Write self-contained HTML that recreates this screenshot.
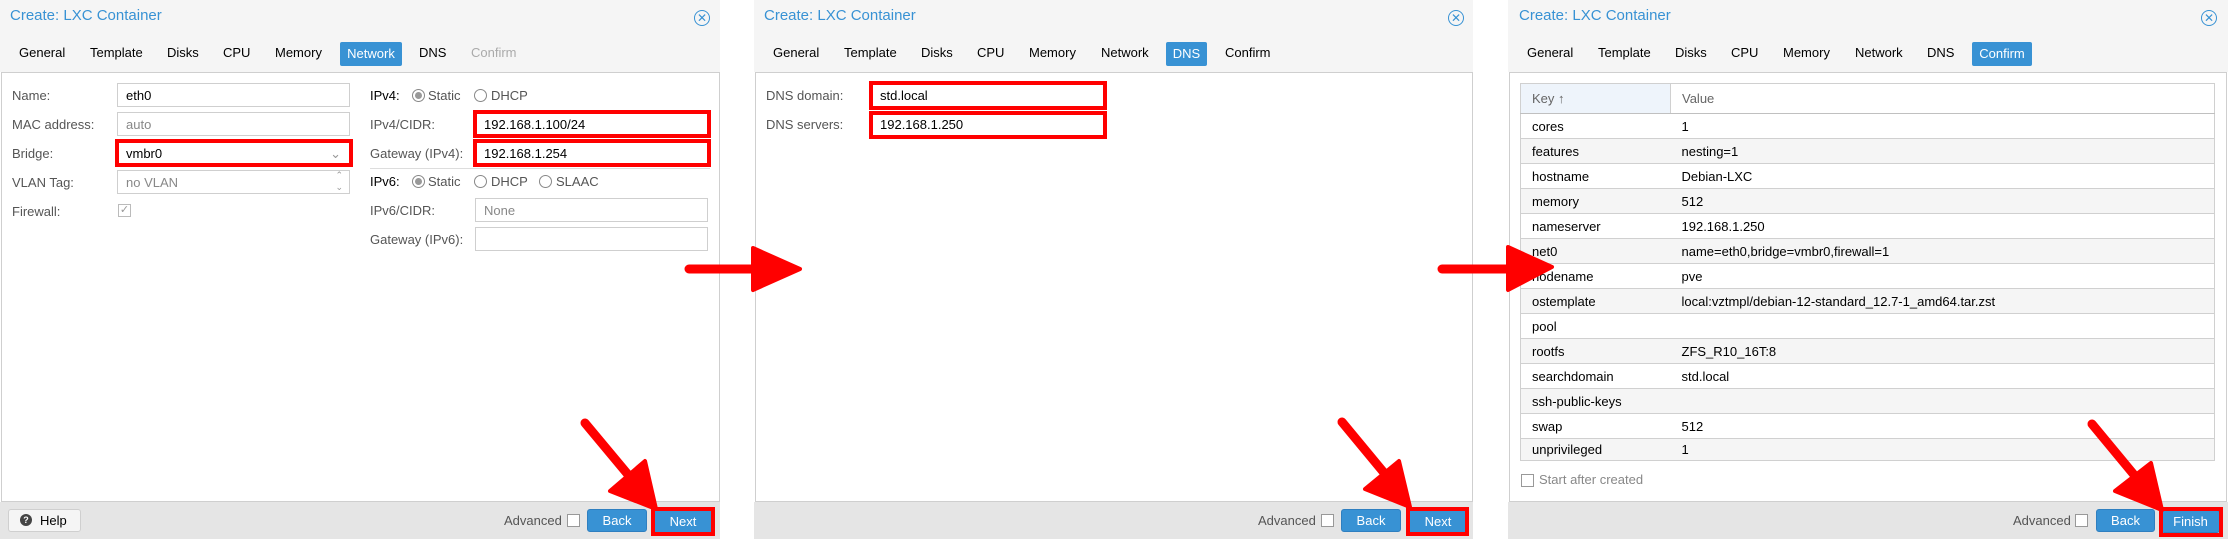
<!DOCTYPE html>
<html><head><meta charset="utf-8"><style>
*{box-sizing:border-box;margin:0;padding:0}
body{width:2228px;height:540px;background:#fff;position:relative;overflow:hidden;font-family:"Liberation Sans",Arial,sans-serif;font-size:13px;color:#000}
.a{position:absolute;white-space:nowrap}
.hdr{position:absolute;background:#f5f5f5;top:0;height:72px}
.title{position:absolute;top:7px;font-size:15px;color:#3892d4}
.close{position:absolute;top:10px;width:16px;height:16px;border:1px solid #3892d4;border-radius:50%;color:#3892d4;font-size:12px;line-height:14px;text-align:center}
.tab{position:absolute;top:45px;font-size:13px}
.tabact{position:absolute;top:42px;height:24px;background:#3892d4;color:#fff;border-radius:2px;text-align:center;line-height:24px;font-size:13px}
.body{position:absolute;top:72px;height:430px;background:#fff;border:1px solid #cfcfcf}
.foot{position:absolute;top:502px;height:37px;background:#e5e5e5}
.lbl{position:absolute;color:#555;font-size:13px}
.fld{position:absolute;height:24px;border:1px solid #cfcfcf;background:#fff;padding-left:8px;line-height:23px;font-size:13px}
.red{position:absolute;border:4px solid #f00}
.btn{position:absolute;top:509px;height:23px;background:#3892d4;border:1px solid #2f7fc0;border-radius:3px;color:#fff;text-align:center;line-height:21px;font-size:13px}
.cb{position:absolute;width:13px;height:13px;border:1px solid #999;background:#fff}
.radio{position:absolute;width:13px;height:13px;border:1px solid #888;border-radius:50%;background:#fff}
.radio.on::after{content:"";position:absolute;left:2px;top:2px;width:7px;height:7px;border-radius:50%;background:#999}
table{position:absolute;border-collapse:collapse;font-size:13px}
td{border-bottom:1px solid #d0d0d0;height:25px;padding-left:11px}
tr.g td{background:#f5f5f5}
</style></head><body>

<!-- Panel 1 -->
<div class="hdr" style="left:0;width:720px"></div>
<div class="title" style="left:10px">Create: LXC Container</div>
<div class="close" style="left:694px">✕</div>
<div class="tab" style="left:19px">General</div>
<div class="tab" style="left:90px">Template</div>
<div class="tab" style="left:167px">Disks</div>
<div class="tab" style="left:223px">CPU</div>
<div class="tab" style="left:275px">Memory</div>
<div class="tabact" style="left:340px;width:62px">Network</div>
<div class="tab" style="left:419px">DNS</div>
<div class="tab" style="left:471px;color:#aaa">Confirm</div>
<div class="body" style="left:1px;width:719px"></div>
<div class="lbl" style="left:12px;top:88px">Name:</div>
<div class="lbl" style="left:12px;top:117px">MAC address:</div>
<div class="lbl" style="left:12px;top:146px">Bridge:</div>
<div class="lbl" style="left:12px;top:175px">VLAN Tag:</div>
<div class="lbl" style="left:12px;top:204px">Firewall:</div>
<div class="fld" style="left:117px;top:83px;width:233px">eth0</div>
<div class="fld" style="left:117px;top:112px;width:233px;color:#888">auto</div>
<div class="fld" style="left:117px;top:141px;width:233px">vmbr0<span style="position:absolute;right:8px;color:#999">⌄</span></div>
<div class="red" style="left:115px;top:139px;width:238px;height:28px"></div>
<div class="fld" style="left:117px;top:170px;width:233px;color:#888">no VLAN<span style="position:absolute;right:6px;top:-2px;font-size:9px;line-height:12px;color:#999">⌃<br>⌄</span></div>
<div class="cb" style="left:118px;top:204px;border-color:#bbb;color:#999;font-size:11px;line-height:11px;text-align:center">✓</div>

<div class="lbl" style="left:370px;top:88px;color:#000">IPv4:</div>
<div class="radio on" style="left:412px;top:89px"></div><div class="lbl" style="left:428px;top:88px">Static</div>
<div class="radio" style="left:474px;top:89px"></div><div class="lbl" style="left:491px;top:88px">DHCP</div>
<div class="lbl" style="left:370px;top:117px">IPv4/CIDR:</div>
<div class="lbl" style="left:370px;top:146px">Gateway (IPv4):</div>
<div class="fld" style="left:475px;top:112px;width:233px">192.168.1.100/24</div>
<div class="fld" style="left:475px;top:141px;width:233px">192.168.1.254</div>
<div class="red" style="left:473px;top:110px;width:238px;height:28px"></div>
<div class="red" style="left:473px;top:139px;width:238px;height:28px"></div>
<div class="a" style="left:370px;top:168px;width:340px;height:1px;background:#ddd"></div>
<div class="lbl" style="left:370px;top:174px;color:#000">IPv6:</div>
<div class="radio on" style="left:412px;top:175px"></div><div class="lbl" style="left:428px;top:174px">Static</div>
<div class="radio" style="left:474px;top:175px"></div><div class="lbl" style="left:491px;top:174px">DHCP</div>
<div class="radio" style="left:539px;top:175px"></div><div class="lbl" style="left:556px;top:174px">SLAAC</div>
<div class="lbl" style="left:370px;top:203px">IPv6/CIDR:</div>
<div class="lbl" style="left:370px;top:232px">Gateway (IPv6):</div>
<div class="fld" style="left:475px;top:198px;width:233px;color:#888">None</div>
<div class="fld" style="left:475px;top:227px;width:233px"></div>

<div class="foot" style="left:0;width:720px"></div>
<div class="a" style="left:8px;top:509px;width:73px;height:23px;background:#f5f5f5;border:1px solid #cfcfcf;border-radius:3px"></div>
<div class="a" style="left:20px;top:514px;width:12px;height:12px;border-radius:50%;background:#444;color:#fff;font-size:9px;line-height:12px;text-align:center;font-weight:bold">?</div>
<div class="a" style="left:40px;top:513px">Help</div>
<div class="lbl" style="left:504px;top:513px">Advanced</div>
<div class="cb" style="left:567px;top:514px"></div>
<div class="btn" style="left:587px;width:60px">Back</div>
<div class="btn" style="left:653px;width:60px;top:510px">Next</div>
<div class="red" style="left:651px;top:507px;width:64px;height:29px"></div>

<!-- Panel 2 -->
<div class="hdr" style="left:754px;width:719px"></div>
<div class="title" style="left:764px">Create: LXC Container</div>
<div class="close" style="left:1448px">✕</div>
<div class="tab" style="left:773px">General</div>
<div class="tab" style="left:844px">Template</div>
<div class="tab" style="left:921px">Disks</div>
<div class="tab" style="left:977px">CPU</div>
<div class="tab" style="left:1029px">Memory</div>
<div class="tab" style="left:1101px">Network</div>
<div class="tabact" style="left:1166px;width:41px">DNS</div>
<div class="tab" style="left:1225px">Confirm</div>
<div class="body" style="left:755px;width:718px"></div>
<div class="lbl" style="left:766px;top:88px">DNS domain:</div>
<div class="lbl" style="left:766px;top:117px">DNS servers:</div>
<div class="fld" style="left:871px;top:83px;width:234px">std.local</div>
<div class="fld" style="left:871px;top:112px;width:234px">192.168.1.250</div>
<div class="red" style="left:869px;top:81px;width:238px;height:29px"></div>
<div class="red" style="left:869px;top:111px;width:238px;height:28px"></div>
<div class="foot" style="left:754px;width:719px"></div>
<div class="lbl" style="left:1258px;top:513px">Advanced</div>
<div class="cb" style="left:1321px;top:514px"></div>
<div class="btn" style="left:1341px;width:60px">Back</div>
<div class="btn" style="left:1408px;width:60px;top:510px">Next</div>
<div class="red" style="left:1406px;top:507px;width:63px;height:29px"></div>

<!-- Panel 3 -->
<div class="hdr" style="left:1508px;width:720px"></div>
<div class="title" style="left:1519px">Create: LXC Container</div>
<div class="close" style="left:2201px">✕</div>
<div class="tab" style="left:1527px">General</div>
<div class="tab" style="left:1598px">Template</div>
<div class="tab" style="left:1675px">Disks</div>
<div class="tab" style="left:1731px">CPU</div>
<div class="tab" style="left:1783px">Memory</div>
<div class="tab" style="left:1855px">Network</div>
<div class="tab" style="left:1927px">DNS</div>
<div class="tabact" style="left:1972px;width:60px">Confirm</div>
<div class="body" style="left:1509px;width:718px"></div>
<table style="left:1520px;top:83px;width:695px;border:1px solid #d0d0d0">
<tr><td style="width:150px;height:30px;background:#eef4fb;color:#666;border-right:1px solid #d0d0d0;border-bottom:1px solid #c0c0c0">Key ↑</td><td style="color:#666;border-bottom:1px solid #c0c0c0">Value</td></tr>
<tr><td>cores</td><td>1</td></tr>
<tr class="g"><td>features</td><td>nesting=1</td></tr>
<tr><td>hostname</td><td>Debian-LXC</td></tr>
<tr class="g"><td>memory</td><td>512</td></tr>
<tr><td>nameserver</td><td>192.168.1.250</td></tr>
<tr class="g"><td>net0</td><td>name=eth0,bridge=vmbr0,firewall=1</td></tr>
<tr><td>nodename</td><td>pve</td></tr>
<tr class="g"><td>ostemplate</td><td>local:vztmpl/debian-12-standard_12.7-1_amd64.tar.zst</td></tr>
<tr><td>pool</td><td></td></tr>
<tr class="g"><td>rootfs</td><td>ZFS_R10_16T:8</td></tr>
<tr><td>searchdomain</td><td>std.local</td></tr>
<tr class="g"><td>ssh-public-keys</td><td></td></tr>
<tr><td>swap</td><td>512</td></tr>
<tr class="g"><td style="height:22px">unprivileged</td><td style="height:22px">1</td></tr>
</table>
<div class="cb" style="left:1521px;top:474px"></div>
<div class="lbl" style="left:1539px;top:472px;color:#888">Start after created</div>
<div class="foot" style="left:1508px;width:720px"></div>
<div class="lbl" style="left:2013px;top:513px">Advanced</div>
<div class="cb" style="left:2075px;top:514px"></div>
<div class="btn" style="left:2096px;width:59px">Back</div>
<div class="btn" style="left:2161px;width:59px;top:510px">Finish</div>
<div class="red" style="left:2159px;top:507px;width:64px;height:30px"></div>

<svg class="a" style="left:0;top:0" width="2228" height="540">
<g stroke="#f00" stroke-width="9" stroke-linecap="round" fill="#f00" stroke-linejoin="round">
<line x1="585" y1="423" x2="635" y2="483"/><polygon points="610,491 645,461 656,509" stroke-width="4"/>
<line x1="1342" y1="422" x2="1390" y2="480"/><polygon points="1365,489 1399,461 1410,507" stroke-width="4"/>
<line x1="2092" y1="424" x2="2140" y2="482"/><polygon points="2115,491 2151,463 2162,510" stroke-width="4"/>
<line x1="689" y1="269" x2="760" y2="269"/><polygon points="753,248 800,269 753,290" stroke-width="4"/>
<line x1="1442" y1="269" x2="1515" y2="269"/><polygon points="1508,247 1552,267 1508,290" stroke-width="4"/>
</g></svg>
</body></html>
